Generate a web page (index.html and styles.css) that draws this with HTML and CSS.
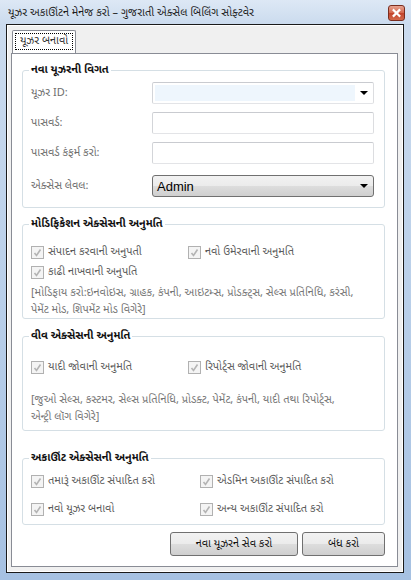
FILE: index.html
```html
<!DOCTYPE html>
<html>
<head>
<meta charset="utf-8">
<link rel="stylesheet" href="styles.css">
</head>
<body>
<div class="window">
  <div class="titlebar">
    <span class="title">યૂઝર અકાઊંટને મેનેજ કરો – ગુજરાતી એક્સેલ બિલિંગ સોફ્ટવેર</span>
    <span class="close"><svg width="16" height="16" viewBox="0 0 16 16"><path d="M5 5 L11 11 M11 5 L5 11" stroke="#fff" stroke-width="2.4" stroke-linecap="square"/></svg></span>
  </div>
  <div class="client">
    <div class="tabs">
      <div class="tab"><span class="focus">યૂઝર બનાવો</span></div>
    </div>
    <div class="page">
      <fieldset class="group g1">
        <legend>નવા યૂઝરની વિગત</legend>
        <div class="row r1"><span class="lbl">યૂઝર ID:</span><span class="combo edit"><span class="fill"></span><span class="arrow"></span></span></div>
        <div class="row r2"><span class="lbl">પાસવર્ડ:</span><span class="input"></span></div>
        <div class="row r3"><span class="lbl">પાસવર્ડ કંફર્મ કરો:</span><span class="input"></span></div>
        <div class="row r4"><span class="lbl">એક્સેસ લેવલ:</span><span class="combo list"><span class="val">Admin</span><span class="arrow"></span></span></div>
      </fieldset>

      <fieldset class="group g2">
        <legend>મોડિફિકેશન એક્સેસની અનુમતિ</legend>
        <div class="cbrow">
          <span class="cb c1"><i></i>સંપાદન કરવાની અનુપતી</span>
          <span class="cb c2"><i></i>નવો ઉમેરવાની અનુમતિ</span>
        </div>
        <div class="cbrow">
          <span class="cb c1"><i></i>કાઢી નાખવાની અનુપતિ</span>
        </div>
        <p class="desc">[મોડિફાય કરો:ઇનવોઇસ, ગ્રાહક, કંપની, આઇટમ્સ, પ્રોડક્ટ્સ, સેલ્સ પ્રતિનિધિ, કરંસી,<br>પેમેંટ મોડ, શિપમેંટ મોડ વિગેરે]</p>
      </fieldset>

      <fieldset class="group g3">
        <legend>વીવ એક્સેસની અનુમતિ</legend>
        <div class="cbrow">
          <span class="cb c1"><i></i>યાદી જોવાની અનુમતિ</span>
          <span class="cb c2"><i></i>રિપોર્ટ્સ જોવાની અનુમતિ</span>
        </div>
        <p class="desc">[જુઓ સેલ્સ, કસ્ટમર, સેલ્સ પ્રતિનિધિ, પ્રોડક્ટ, પેમેંટ, કંપની, યાદી તથા રિપોર્ટ્સ,<br>એન્ટ્રી લૉગ વિગેરે]</p>
      </fieldset>

      <fieldset class="group g4">
        <legend>અકાઊંટ એક્સેસની અનુમતિ</legend>
        <div class="cbrow">
          <span class="cb c1"><i></i>તમારૂં અકાઊંટ સંપાદિત કરો</span>
          <span class="cb c3"><i></i>એડમિન અકાઊંટ સંપાદિત કરો</span>
        </div>
        <div class="cbrow">
          <span class="cb c1"><i></i>નવો યૂઝર બનાવો</span>
          <span class="cb c3"><i></i>અન્ય અકાઊંટ સંપાદિત કરો</span>
        </div>
      </fieldset>

      <div class="buttons">
        <button class="btn save">નવા યૂઝરને સેવ કરો</button>
        <button class="btn close-btn">બંધ કરો</button>
      </div>
    </div>
  </div>
</div>
</body>
</html>
```

FILE: styles.css
```css
* { box-sizing: border-box; }
html, body { margin: 0; padding: 0; }
body {
  width: 411px; height: 580px; overflow: hidden;
  font-family: "Noto Sans Gujarati", "Lohit Gujarati", "Shruti", "Noto Sans", sans-serif;
  font-size: 11px;
}
.window {
  width: 411px; height: 580px;
  background: linear-gradient(to bottom, #dde8f5 0px, #cbdbee 24px, #b9cfe9 300px, #a6c1e2 580px);
  display: flex; flex-direction: column;
}
.titlebar {
  height: 24px; flex: none;
  display: flex; align-items: center;
  padding: 0 6px 0 8px;
}
.title {
  flex: 1; color: #1e1e1e; font-size: 11px; white-space: nowrap;
  margin-top: 2px;
}
.close {
  width: 17px; height: 16px; margin-top: 2px;
  border: 1px solid #7a2d1f; border-radius: 3px;
  background: linear-gradient(to bottom, #e8a391 0%, #d2664c 50%, #c2432b 51%, #d36a4c 100%);
  display: flex; align-items: center; justify-content: center;
}
.close svg { display: block; }
.client {
  flex: 1;
  margin: 0 7px 7px 6px;
  border: 1px solid #1a1a1a;
  box-shadow: inset 0 0 0 1px #ffffff;
  background: #f0f0f0;
  padding: 5px 5px 5px 4px;
  display: flex; flex-direction: column;
}
.tabs { height: 23px; flex: none; display: flex; padding-left: 1px; }
.tab {
  width: 64px; height: 23px;
  border: 1px solid #898c95; border-bottom: none;
  border-radius: 2px 2px 0 0;
  background: #ffffff;
  padding: 2px 2px 0 2px;
  position: relative; z-index: 1; margin-bottom: -1px;
}
.focus {
  display: block; height: 17px;
  border: 1px dotted #000;
  line-height: 14px; padding-left: 4px; color: #333;
}
.page {
  flex: 1;
  border: 1px solid #898c95;
  background: #ffffff;
  padding: 9px 12px 0 10px;
  display: flex; flex-direction: column;
}
.group {
  margin: 0; padding: 0 0 0 8px;
  border: 1px solid #d5dfe5; border-radius: 3px;
  width: 363px;
  flex: none;
}
legend {
  padding: 0 2px; margin-left: -2px;
  line-height: 14px; height: 14px;
  color: #111; font-weight: bold; font-size: 11px;
}
.g1 { height: 145px; padding-top: 5px; }
.g2 { height: 102px; margin-top: 9px; padding-top: 11px; }
.g3 { height: 102px; margin-top: 10px; padding-top: 14px; }
.g4 { height: 74px; margin-top: 20px; padding-top: 6px; }

.row { display: flex; align-items: center; height: 22px; }
.r2, .r3 { margin-top: 8px; }
.r4 { margin-top: 11px; }
.lbl { width: 121px; flex: none; color: #6e6e6e; }
.input, .combo {
  width: 222px; height: 22px; flex: none;
  border: 1px solid #abadb3; border-radius: 2px;
  background: #fff;
  border-color: #c9cbd0 #dcdde0 #e3e4e7 #d3d5d9;
}
.combo { position: relative; display: flex; align-items: center; }
.edit .fill {
  position: absolute; left: 2px; top: 2px; width: 200px; height: 16px;
  background: #eef6fd;
}
.arrow {
  position: absolute; right: 5px; top: 8px;
  width: 0; height: 0;
  border-left: 4px solid transparent; border-right: 4px solid transparent;
  border-top: 4px solid #000;
}
.list {
  border: 1px solid #707070; border-radius: 3px;
  background: linear-gradient(to bottom, #f2f2f2 0%, #ebebeb 50%, #dddddd 51%, #cfcfcf 100%);
}
.val { font-family: "Liberation Sans", Arial, sans-serif; font-size: 13px; padding-left: 4px; color: #000; }

.cbrow { display: flex; height: 20px; align-items: center; }
.g4 .cbrow + .cbrow { margin-top: 8px; }
.cb { display: flex; align-items: center; color: #5b5b5b; white-space: nowrap; }
.c1 { width: 157px; }
.c3 { margin-left: 12px; }
.cb i {
  width: 13px; height: 13px; flex: none; margin-right: 4px;
  border: 1px solid #b1b1b1;
  background: #f4f4f4 url("data:image/svg+xml,%3Csvg xmlns='http://www.w3.org/2000/svg' width='11' height='11'%3E%3Cpath d='M2.5 6 L4.5 8.5 L8.5 2.5' fill='none' stroke='%23b4b4b4' stroke-width='1.6'/%3E%3C/svg%3E") center/11px 11px no-repeat;
}
.desc {
  margin: 3px 0 0 0; color: #767676; line-height: 17px; white-space: nowrap;
}
.g3 .desc { margin-top: 15px; }

.buttons { display: flex; justify-content: flex-end; gap: 4px; margin-top: 7px; width: 363px; }
.btn {
  height: 24px; margin: 0;
  border: 1px solid #707070; border-radius: 3px;
  background: linear-gradient(to bottom, #f2f2f2 0%, #ebebeb 50%, #dddddd 51%, #cfcfcf 100%);
  font-family: inherit; font-size: 11px; color: #111;
  padding: 0;
}
.save { width: 128px; }
.close-btn { width: 83px; }
```
